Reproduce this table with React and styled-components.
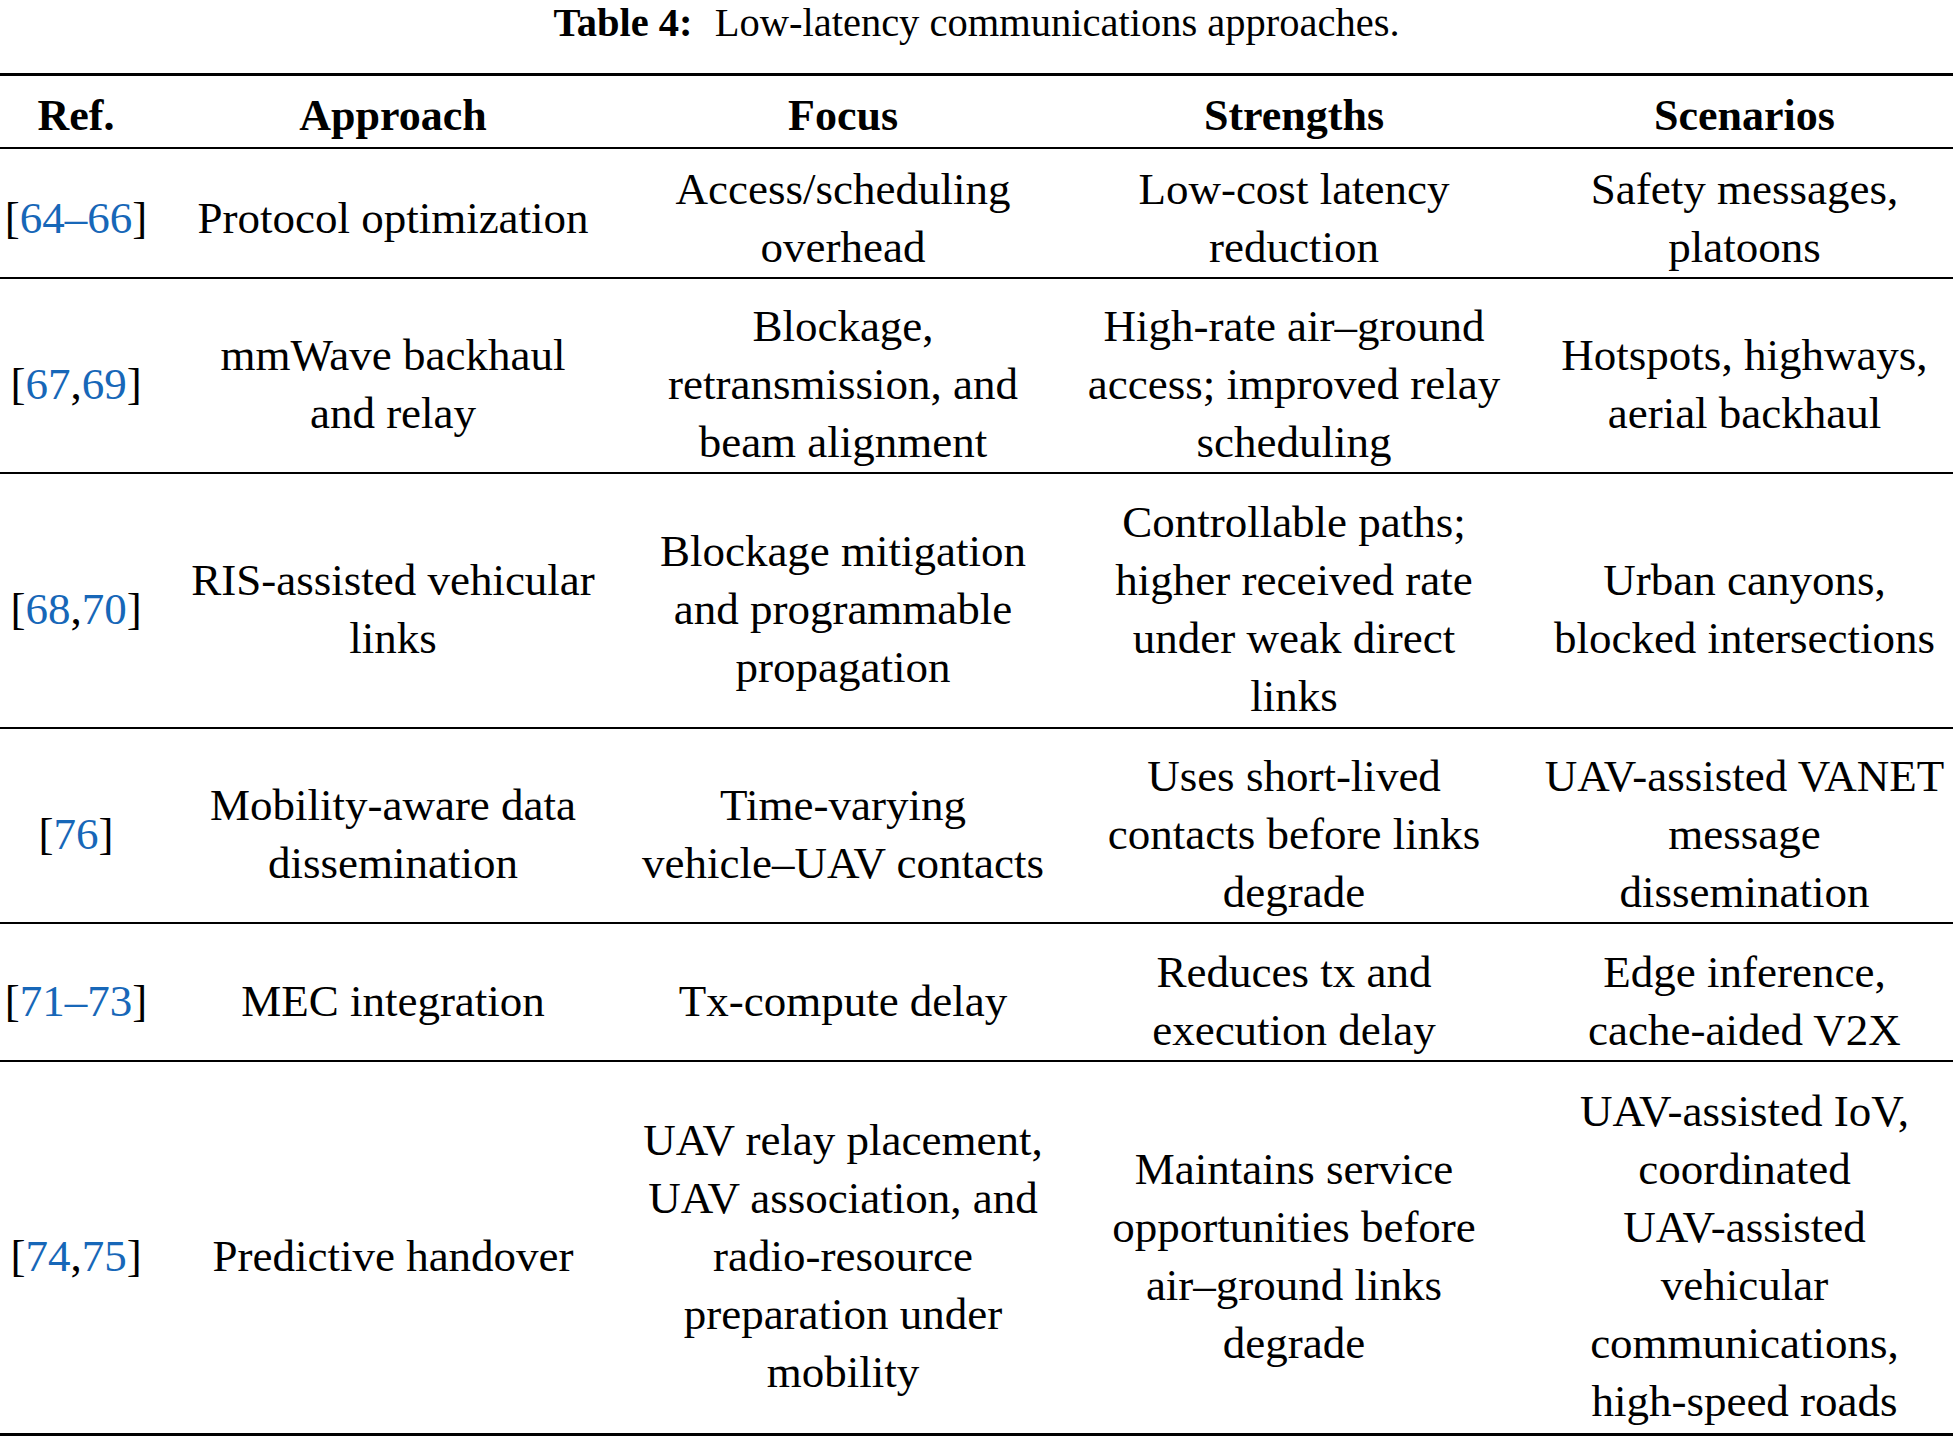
import React from "react";
import styled, { createGlobalStyle } from "styled-components";

const GlobalStyle = createGlobalStyle`
  html, body {
    margin: 0;
    padding: 0;
    background: #ffffff;
  }
  body {
    font-family: "Liberation Serif", "Times New Roman", serif;
    color: #000000;
  }
`;

const Page = styled.div`
  width: 1953px;
  background: #ffffff;
`;

const Caption = styled.div`
  text-align: center;
  font-size: 40.5px;
  line-height: 45px;
  height: 45px;
  margin-bottom: 28px;
  white-space: nowrap;
`;

const CaptionLabel = styled.span`
  font-weight: 700;
  margin-right: 12px;
`;

const Table = styled.div`
  border-top: 3px solid #000;
  border-bottom: 3px solid #000;
`;

const Row = styled.div`
  display: grid;
  grid-template-columns: 152px 482px 418px 484px 1fr;
  height: ${(p) => p.$h}px;
  border-bottom: ${(p) => (p.$last ? "none" : "2px solid #000")};
  font-size: ${(p) => (p.$head ? "44px" : "45px")};
  font-weight: ${(p) => (p.$head ? 700 : 400)};
`;

const Cell = styled.div`
  display: flex;
  flex-direction: column;
  align-items: center;
  justify-content: center;
  box-sizing: border-box;
  padding-top: ${(p) => p.$pad || 0}px;
  line-height: 58px;
  min-width: 0;
`;

const Line = styled.span`
  white-space: nowrap;
`;

const Link = styled.span`
  color: #1767b8;
`;

const rows = [
  {
    h: 128,
    pad: 9,
    ref: ["64–66"],
    approach: ["Protocol optimization"],
    focus: ["Access/scheduling", "overhead"],
    strengths: ["Low-cost latency", "reduction"],
    scenarios: ["Safety messages,", "platoons"],
  },
  {
    h: 193,
    pad: 17,
    ref: ["67", "69"],
    approach: ["mmWave backhaul", "and relay"],
    focus: ["Blockage,", "retransmission, and", "beam alignment"],
    strengths: ["High-rate air–ground", "access; improved relay", "scheduling"],
    scenarios: ["Hotspots, highways,", "aerial backhaul"],
  },
  {
    h: 253,
    pad: 17,
    ref: ["68", "70"],
    approach: ["RIS-assisted vehicular", "links"],
    focus: ["Blockage mitigation", "and programmable", "propagation"],
    strengths: [
      "Controllable paths;",
      "higher received rate",
      "under weak direct",
      "links",
    ],
    scenarios: ["Urban canyons,", "blocked intersections"],
  },
  {
    h: 193,
    pad: 17,
    ref: ["76"],
    approach: ["Mobility-aware data", "dissemination"],
    focus: ["Time-varying", "vehicle–UAV contacts"],
    strengths: ["Uses short-lived", "contacts before links", "degrade"],
    scenarios: ["UAV-assisted VANET", "message", "dissemination"],
  },
  {
    h: 136,
    pad: 17,
    ref: ["71–73"],
    approach: ["MEC integration"],
    focus: ["Tx-compute delay"],
    strengths: ["Reduces tx and", "execution delay"],
    scenarios: ["Edge inference,", "cache-aided V2X"],
  },
  {
    h: 371,
    pad: 17,
    ref: ["74", "75"],
    approach: ["Predictive handover"],
    focus: [
      "UAV relay placement,",
      "UAV association, and",
      "radio-resource",
      "preparation under",
      "mobility",
    ],
    strengths: [
      "Maintains service",
      "opportunities before",
      "air–ground links",
      "degrade",
    ],
    scenarios: [
      "UAV-assisted IoV,",
      "coordinated",
      "UAV-assisted",
      "vehicular",
      "communications,",
      "high-speed roads",
    ],
  },
];

function Lines({ items, pad }) {
  return (
    <Cell $pad={pad}>
      {items.map((t, i) => (
        <Line key={i}>{t}</Line>
      ))}
    </Cell>
  );
}

function Ref({ parts, pad }) {
  return (
    <Cell $pad={pad}>
      <Line>
        [
        {parts.map((p, i) => (
          <React.Fragment key={i}>
            {i > 0 && ","}
            <Link>{p}</Link>
          </React.Fragment>
        ))}
        ]
      </Line>
    </Cell>
  );
}

const headers = ["Ref.", "Approach", "Focus", "Strengths", "Scenarios"];

export default function App() {
  return (
    <Page>
      <GlobalStyle />
      <Caption>
        <CaptionLabel>Table 4:</CaptionLabel> Low-latency communications
        approaches.
      </Caption>
      <Table>
        <Row $h={71} $head>
          {headers.map((h) => (
            <Cell key={h} $pad={9}>
              {h}
            </Cell>
          ))}
        </Row>
        {rows.map((r, i) => (
          <Row key={i} $h={r.h} $last={i === rows.length - 1}>
            <Ref parts={r.ref} pad={r.pad} />
            <Lines items={r.approach} pad={r.pad} />
            <Lines items={r.focus} pad={r.pad} />
            <Lines items={r.strengths} pad={r.pad} />
            <Lines items={r.scenarios} pad={r.pad} />
          </Row>
        ))}
      </Table>
    </Page>
  );
}
